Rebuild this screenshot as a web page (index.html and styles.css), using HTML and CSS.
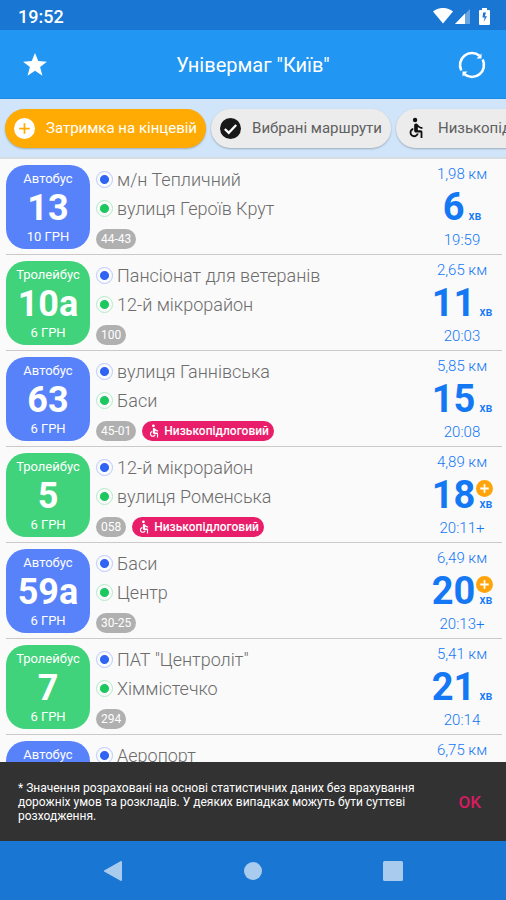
FILE: index.html
```html
<!DOCTYPE html>
<html lang="uk">
<head>
<meta charset="utf-8">
<meta name="viewport" content="width=device-width, initial-scale=1">
<title>Універмаг "Київ"</title>
<link rel="stylesheet" href="styles.css">
</head>
<body>
<svg class="defs" aria-hidden="true">
  <symbol id="wheelchair" viewBox="0 0 24 24">
    <circle cx="11" cy="3.2" r="2.4"/>
    <path d="M19 13v-2c-1.5 0-3-.8-4-1.800l-1.300-1.400c-.2-.2-.4-.4-.6-.5-.3-.2-.7-.3-1.100-.3-1.100 0-2 .9-2 2v6c0 1.100.9 2 2 2h5v6h2v-6.500c0-1.100-.9-2-2-2h-3v-3.500c1.300 1.100 3.200 2 5 2zm-6.200 5c-.4 1.200-1.500 2-2.800 2-1.700 0-3-1.300-3-3 0-1.300.8-2.400 2-2.800v-2.100c-2.300.5-4 2.500-4 4.900 0 2.800 2.200 5 5 5 2.400 0 4.400-1.700 4.900-4h-2.100z"/>
  </symbol>
  <symbol id="plus" viewBox="0 0 24 24">
    <path fill-rule="evenodd" d="M12 0a12 12 0 1 0 0 24a12 12 0 0 0 0-24zM11 6h2v5h5v2h-5v5h-2v-5H6v-2h5z"/>
  </symbol>
  <symbol id="plus-badge" viewBox="0 0 24 24">
    <circle cx="12" cy="12" r="12" fill="#ffa40b"/>
    <path d="M12 6v12M6 12h12" fill="none" stroke="#fff" stroke-width="2.500"/>
  </symbol>
</svg>

<div class="statusbar">
  <span class="clock">19:52</span>
  <span class="indicators">
    <svg width="20" height="16" viewBox="0 0 20 16"><path d="M0 3.500C6-1.200 14-1.200 20 3.500L10 15.500z" fill="#fff"/></svg>
    <svg width="16" height="16" viewBox="0 0 16 16"><path d="M15 1v15H0z" fill="#fff" opacity=".35"/><path d="M10 5.500V16H0z" fill="#fff"/></svg>
    <svg class="battery" width="11" height="17" viewBox="0 0 11 17"><path d="M3 0h5v2h2q1 0 1 1v13q0 1-1 1H1q-1 0-1-1V3q0-1 1-1h2z" fill="#fff"/><path d="M7 4.500H4.200L3.500 9.500h2.200l-1 4.500L8 8.200H5.800z" fill="#1976d2"/></svg>
  </span>
</div>

<header class="appbar">
  <button class="icon-button" aria-label="Обране">
    <svg width="26" height="26" viewBox="0 0 24 24"><path fill="#fff" d="M12 17.270 18.900 22l-2.200-8.100L23 8.900l-8-.5L12 1 9 8.400l-8 .5 6.300 5L5.100 22z"/></svg>
  </button>
  <h1 class="title">Універмаг "Київ"</h1>
  <button class="icon-button" aria-label="Оновити">
    <svg width="28" height="28" viewBox="0 0 28 28" fill="none" stroke="#fff" stroke-width="2.600">
      <path d="M3.300 19.500A12 12 0 0 1 21.500 4.700"/>
      <path d="M24.700 8.500A12 12 0 0 1 6.500 23.300"/>
      <path d="M23.500 2.500v5H18.500zM4.500 25.500v-5h5z" fill="#fff" stroke="none"/>
    </svg>
  </button>
</header>

<nav class="chips">
  <button class="chip chip-active"><svg class="chip-icon" width="21" height="21" fill="#fff"><use href="#plus"/></svg>Затримка на кінцевій</button>
  <button class="chip"><svg class="chip-icon" width="21" height="21" viewBox="0 0 24 24"><circle cx="12" cy="12" r="12" fill="#181818"/><path d="M5.500 12.500l4.500 4.500 8.500-9" fill="none" stroke="#fff" stroke-width="2.600"/></svg>Вибрані маршрути</button>
  <button class="chip"><svg class="chip-icon" width="22" height="22" fill="#111"><use href="#wheelchair"/></svg>Низькопідлоговий</button>
</nav>

<main class="list">
  <article class="row">
    <div class="route bus"><span>Автобус</span><strong>13</strong><span>10 ГРН</span></div>
    <div class="stops"><p class="stop from">м/н Тепличний</p><p class="stop to">вулиця Героїв Крут</p><div class="tags"><span class="tag">44-43</span></div></div>
    <div class="eta"><span class="detail">1,98 км</span><span class="wait"><b>6</b> <small>хв</small></span><span class="detail">19:59</span></div>
  </article>
  <article class="row">
    <div class="route trolley"><span>Тролейбус</span><strong>10а</strong><span>6 ГРН</span></div>
    <div class="stops"><p class="stop from">Пансіонат для ветеранів</p><p class="stop to">12-й мікрорайон</p><div class="tags"><span class="tag">100</span></div></div>
    <div class="eta"><span class="detail">2,65 км</span><span class="wait"><b>11</b> <small>хв</small></span><span class="detail">20:03</span></div>
  </article>
  <article class="row">
    <div class="route bus"><span>Автобус</span><strong>63</strong><span>6 ГРН</span></div>
    <div class="stops"><p class="stop from">вулиця Ганнівська</p><p class="stop to">Баси</p><div class="tags"><span class="tag">45-01</span><span class="tag low"><svg width="14" height="14" fill="#fff"><use href="#wheelchair"/></svg>Низькопідлоговий</span></div></div>
    <div class="eta"><span class="detail">5,85 км</span><span class="wait"><b>15</b> <small>хв</small></span><span class="detail">20:08</span></div>
  </article>
  <article class="row">
    <div class="route trolley"><span>Тролейбус</span><strong>5</strong><span>6 ГРН</span></div>
    <div class="stops"><p class="stop from">12-й мікрорайон</p><p class="stop to">вулиця Роменська</p><div class="tags"><span class="tag">058</span><span class="tag low"><svg width="14" height="14" fill="#fff"><use href="#wheelchair"/></svg>Низькопідлоговий</span></div></div>
    <div class="eta"><span class="detail">4,89 км</span><span class="wait"><b>18</b> <small>хв</small><svg class="delay" width="17" height="17"><use href="#plus-badge"/></svg></span><span class="detail">20:11+</span></div>
  </article>
  <article class="row">
    <div class="route bus"><span>Автобус</span><strong>59а</strong><span>6 ГРН</span></div>
    <div class="stops"><p class="stop from">Баси</p><p class="stop to">Центр</p><div class="tags"><span class="tag">30-25</span></div></div>
    <div class="eta"><span class="detail">6,49 км</span><span class="wait"><b>20</b> <small>хв</small><svg class="delay" width="17" height="17"><use href="#plus-badge"/></svg></span><span class="detail">20:13+</span></div>
  </article>
  <article class="row">
    <div class="route trolley"><span>Тролейбус</span><strong>7</strong><span>6 ГРН</span></div>
    <div class="stops"><p class="stop from">ПАТ "Центроліт"</p><p class="stop to">Хіммістечко</p><div class="tags"><span class="tag">294</span></div></div>
    <div class="eta"><span class="detail">5,41 км</span><span class="wait"><b>21</b> <small>хв</small></span><span class="detail">20:14</span></div>
  </article>
  <article class="row">
    <div class="route bus"><span>Автобус</span></div>
    <div class="stops"><p class="stop from">Аеропорт</p></div>
    <div class="eta"><span class="detail">6,75 км</span></div>
  </article>
</main>

<aside class="snackbar">
  <p>* Значення розраховані на основі статистичних даних без врахування дорожніх умов та розкладів. У деяких випадках можуть бути суттєві розходження.</p>
  <button class="ok">OK</button>
</aside>

<nav class="navbar">
  <button aria-label="Назад"><svg width="20" height="20" viewBox="0 0 20 20"><path d="M18 1v18L2 10z" fill="#a9cbee" stroke="#a9cbee" stroke-width="2" stroke-linejoin="round"/></svg></button>
  <button aria-label="Додому"><svg width="20" height="20" viewBox="0 0 20 20"><circle cx="10" cy="10" r="9" fill="#a9cbee"/></svg></button>
  <button aria-label="Огляд"><svg width="20" height="20" viewBox="0 0 20 20"><rect width="20" height="20" rx="1.500" fill="#a9cbee"/></svg></button>
</nav>
</body>
</html>
```
FILE: styles.css
```css
* { box-sizing: border-box; }
body {
  margin: 0;
  height: 100vh;
  display: flex;
  flex-direction: column;
  overflow: hidden;
  background: #fafafa;
  font-family: Roboto, "Noto Sans", sans-serif;
}
button { font: inherit; border: 0; padding: 0; background: none; }
svg { display: block; flex: none; }
p, h1 { margin: 0; }
.defs { position: absolute; width: 0; height: 0; }

.statusbar {
  flex: none;
  display: flex;
  align-items: center;
  justify-content: space-between;
  height: 30px;
  padding: 2px 16px 0 18px;
  background: #1976d2;
  color: #fff;
}
.clock { font-size: 18px; font-weight: 500; }
.indicators { display: flex; align-items: center; gap: 2px; }
.battery { margin-left: 6px; }

.appbar {
  flex: none;
  display: flex;
  align-items: center;
  justify-content: space-between;
  height: 69px;
  padding: 1px 20px 0 22px;
  background: #2196f3;
  border-bottom: 1px solid #1d8be4;
  color: #fff;
}
.title { font-size: 20px; font-weight: 400; }

.chips {
  flex: none;
  display: flex;
  align-items: center;
  gap: 5px;
  height: 60px;
  padding: 0 5px;
  overflow: hidden;
  background: #d0e5f9;
  border-bottom: 2px solid #d5dce2;
}
.chip {
  flex: none;
  display: flex;
  align-items: center;
  gap: 11px;
  height: 39px;
  padding: 0 9px;
  border-radius: 20px;
  background: #ececec;
  box-shadow: 0 1px 2px rgba(0, 0, 0, .25);
  color: #606060;
  font-size: 15px;
  white-space: nowrap;
}
.chip-active { background: #ffab03; color: #fff; }

.list { flex: 1; min-height: 0; overflow: hidden; padding: 0 4px 0 6px; }
.row {
  display: flex;
  height: 96px;
  padding: 6px 0 5px;
  border-bottom: 1px solid #cacaca;
}
.route {
  flex: none;
  display: flex;
  flex-direction: column;
  align-items: center;
  width: 84px;
  height: 84px;
  padding-top: 5px;
  border-radius: 20px;
  color: #fff;
  font-size: 13px;
  line-height: 18px;
}
.route strong { font-size: 36px; line-height: 40px; font-weight: 700; }
.bus { background: #5882fa; }
.trolley { background: #40d37b; }

.stops { flex: 1; min-width: 0; padding-left: 6px; }
.stop {
  display: flex;
  align-items: center;
  gap: 4px;
  height: 29px;
  color: #6c6c6c;
  font-size: 18px;
  font-weight: 300;
}
.stop::before {
  content: "";
  flex: none;
  width: 15px;
  height: 15px;
  border: 1px solid;
  border-radius: 50%;
}
.from::before { border-color: #b9c9fb; background: radial-gradient(circle, #2e63f4 4px, #fafafa 5px); }
.to::before { border-color: #b3ebc9; background: radial-gradient(circle, #1bc85f 4px, #fafafa 5px); }
.tags { display: flex; gap: 6px; margin-top: 6px; }
.tag {
  display: flex;
  align-items: center;
  gap: 3px;
  height: 20px;
  padding: 0 5px;
  border-radius: 10px;
  background: #b0b0b0;
  color: #fff;
  font-size: 12px;
}
.low { background: #e91e6a; font-weight: 500; }

.eta {
  flex: none;
  display: flex;
  flex-direction: column;
  align-items: center;
  width: 80px;
  color: #1478f5;
}
.detail { font-size: 15px; line-height: 18px; font-weight: 300; }
.wait {
  position: relative;
  display: flex;
  align-items: baseline;
  gap: 4px;
  height: 48px;
  white-space: nowrap;
}
.wait b { font-size: 38px; line-height: 48px; font-weight: 700; }
.wait small { font-size: 12px; line-height: 16px; font-weight: 500; }
.delay { position: absolute; right: -1px; top: 9px; }

.snackbar {
  flex: none;
  display: flex;
  align-items: center;
  justify-content: space-between;
  gap: 16px;
  height: 79px;
  padding: 0 25px 0 18px;
  background: #323232;
  color: #fff;
  font-size: 12px;
  line-height: 14px;
}
.snackbar p { max-width: 420px; }
.ok { color: #d81b60; font-size: 17px; font-weight: 500; }

.navbar {
  flex: none;
  display: flex;
  align-items: center;
  justify-content: center;
  gap: 120px;
  height: 59px;
  background: #1976d2;
}
```
